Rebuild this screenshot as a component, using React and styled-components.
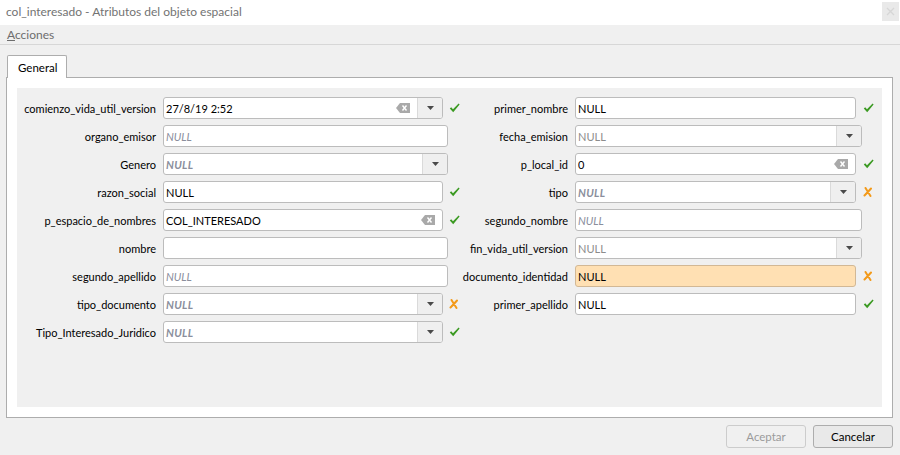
import styled, { createGlobalStyle } from "styled-components";

const GlobalStyle = createGlobalStyle`
  html, body {
    margin: 0;
    padding: 0;
    background: #f0f0f0;
  }
  body {
    font-family: Lato, "Liberation Sans", sans-serif;
    font-size: 11px;
    color: #000;
  }
`;

// form data: left and right columns of the attribute form
const leftFields = [
  { label: "comienzo_vida_util_version", kind: "datetime", value: "27/8/19 2:52", clear: true, status: "ok" },
  { label: "organo_emisor", kind: "text", placeholder: true },
  { label: "Genero", kind: "combo" },
  { label: "razon_social", kind: "text", value: "NULL", status: "ok" },
  { label: "p_espacio_de_nombres", kind: "text", value: "COL_INTERESADO", clear: true, status: "ok" },
  { label: "nombre", kind: "text", value: "" },
  { label: "segundo_apellido", kind: "text", placeholder: true },
  { label: "tipo_documento", kind: "combo", status: "bad" },
  { label: "Tipo_Interesado_Juridico", kind: "combo", status: "ok" },
];

const rightFields = [
  { label: "primer_nombre", kind: "text", value: "NULL", status: "ok" },
  { label: "fecha_emision", kind: "date" },
  { label: "p_local_id", kind: "text", value: "0", clear: true, status: "ok" },
  { label: "tipo", kind: "combo", status: "bad" },
  { label: "segundo_nombre", kind: "text", placeholder: true },
  { label: "fin_vida_util_version", kind: "date" },
  { label: "documento_identidad", kind: "text", value: "NULL", warn: true, status: "bad" },
  { label: "primer_apellido", kind: "text", value: "NULL", status: "ok" },
  null,
];

const ClearIcon = () => (
  <svg width="14" height="10" viewBox="0 0 14 10">
    <polygon points="0,5 4,0 14,0 14,10 4,10" fill="#a9a9a9" />
    <path d="M6.5 2.5 L10.5 7.5 M10.5 2.5 L6.5 7.5" stroke="#fff" strokeWidth="1.4" />
  </svg>
);

const ArrowIcon = () => (
  <svg width="7" height="4" viewBox="0 0 7 4">
    <polygon points="0,0 7,0 3.5,4" fill="#4a4a4a" />
  </svg>
);

// heavy check mark, thicker towards the right stroke
const CheckIcon = () => (
  <svg width="11" height="10" viewBox="0 0 11 10">
    <path d="M0.8 5.4 L2.2 4.2 L4 6.2 L9.6 0.6 L10.6 1.6 L4.2 9.2 Z" fill="#3b9a22" />
  </svg>
);

const CrossIcon = () => (
  <svg width="10" height="10" viewBox="0 0 10 10">
    <path d="M2.5 1 Q5 5 7.5 9 M8 1.5 Q5 5 1.5 8.5" fill="none" stroke="#f39a1a" strokeWidth="2" strokeLinecap="round" />
  </svg>
);

const FieldInput = ({ field }) => {
  const { kind, value, placeholder, clear, warn } = field;
  let text = null;
  if (kind === "combo") text = <ComboNull>NULL</ComboNull>;
  else if (kind === "date") text = <DateNull>NULL</DateNull>;
  else if (placeholder) text = <Placeholder>NULL</Placeholder>;
  else text = <Value>{value}</Value>;

  return (
    <Field $warn={warn}>
      {text}
      {clear && (
        <ClearSlot>
          <ClearIcon />
        </ClearSlot>
      )}
      {(kind === "combo" || kind === "date" || kind === "datetime") && (
        <DropButton>
          <ArrowIcon />
        </DropButton>
      )}
    </Field>
  );
};

const FormCell = ({ field, side }) => {
  if (!field) return <Cell />;
  return (
    <Cell>
      <Label $side={side}>{field.label}</Label>
      <FieldInput field={field} />
      <StatusSlot $side={side} $has={!!field.status}>
        {field.status === "ok" && <CheckIcon />}
        {field.status === "bad" && <CrossIcon />}
      </StatusSlot>
    </Cell>
  );
};

export default function App() {
  return (
    <Window>
      <GlobalStyle />
      <TitleBar>
        <Title>col_interesado - Atributos del objeto espacial</Title>
        <CloseButton>
          <svg width="9" height="9" viewBox="0 0 9 9">
            <path d="M1 1 L8 8 M8 1 L1 8" stroke="#d6d6d6" strokeWidth="1.3" />
          </svg>
        </CloseButton>
      </TitleBar>
      <MenuBar>
        <MenuItem>
          <u>A</u>cciones
        </MenuItem>
      </MenuBar>
      <Body>
        <TabBar>
          <Tab>General</Tab>
        </TabBar>
        <Pane>
          <FormArea>
            {leftFields.map((f, i) => [
              <FormCell key={`l${i}`} field={f} side="left" />,
              <FormCell key={`r${i}`} field={rightFields[i]} side="right" />,
            ])}
          </FormArea>
        </Pane>
        <Footer>
          <Button disabled>Aceptar</Button>
          <Button>Cancelar</Button>
        </Footer>
      </Body>
    </Window>
  );
}

const Window = styled.div`
  width: 900px;
  height: 455px;
  display: flex;
  flex-direction: column;
  background: #f0f0f0;
  overflow: hidden;
`;

const TitleBar = styled.div`
  height: 25px;
  background: #fff;
  display: flex;
  align-items: center;
  justify-content: space-between;
  padding: 0 1px 0 6px;
`;

const Title = styled.span`
  color: #737373;
  font-size: 12px;
  margin-top: -3px;
`;

const CloseButton = styled.div`
  width: 17px;
  height: 19px;
  margin-top: -3px;
  background: #e9e9e9;
  display: flex;
  align-items: center;
  justify-content: center;
`;

const MenuBar = styled.div`
  height: 19px;
  display: flex;
  align-items: center;
  padding-left: 7px;
  border-bottom: 1px solid #d7d7d7;
`;

const MenuItem = styled.span`
  color: #6d6d6d;
  font-size: 12px;
`;

const Body = styled.div`
  flex: 1;
  display: flex;
  flex-direction: column;
  padding: 10px 7px 0 6px;
`;

const TabBar = styled.div`
  display: flex;
  padding-left: 1px;
  position: relative;
  z-index: 1;
`;

const Tab = styled.div`
  width: 60px;
  height: 23px;
  box-sizing: border-box;
  background: #fff;
  border: 1px solid #adadad;
  border-bottom: none;
  border-radius: 2px 2px 0 0;
  padding-left: 10px;
  display: flex;
  align-items: center;
  font-size: 11.5px;
`;

const Pane = styled.div`
  margin-top: -1px;
  background: #fff;
  border: 1px solid #adadad;
  padding: 10px;
`;

const FormArea = styled.div`
  height: 319px;
  box-sizing: border-box;
  background: #f0f0f0;
  padding: 9px 0 0 9px;
  display: grid;
  grid-template-columns: 439px 417px;
  grid-auto-rows: 22px;
  row-gap: 6px;
  align-content: start;
`;

const Cell = styled.div`
  display: flex;
  align-items: center;
  height: 22px;
`;

const Label = styled.div`
  width: ${({ $side }) => ($side === "left" ? 130 : 103)}px;
  flex-shrink: 0;
  margin-right: 7px;
  display: flex;
  justify-content: flex-end;
  white-space: nowrap;
  font-size: 11px;
  color: #000;
`;

const Field = styled.div`
  flex: 1;
  height: 22px;
  box-sizing: border-box;
  display: flex;
  align-items: center;
  border: 1px solid ${({ $warn }) => ($warn ? "#d2b895" : "#bcbcbc")};
  border-radius: 3px;
  background: ${({ $warn }) => ($warn ? "#ffe0b3" : "#fff")};
  overflow: hidden;
`;

const Value = styled.span`
  flex: 1;
  padding-left: 2px;
  font-size: 11px;
  white-space: nowrap;
`;

const Placeholder = styled(Value)`
  font-style: italic;
  color: #8a8e9c;
`;

const ComboNull = styled(Value)`
  font-style: italic;
  font-weight: 700;
  color: #8a8e9c;
  letter-spacing: 0.3px;
`;

const DateNull = styled(Value)`
  color: #8c8c8c;
`;

const ClearSlot = styled.div`
  display: flex;
  align-items: center;
  padding: 0 7px 0 4px;
`;

const DropButton = styled.div`
  width: 24px;
  align-self: stretch;
  display: flex;
  align-items: center;
  justify-content: center;
  border-left: 1px solid #dadada;
  background: #efefef;
`;

const StatusSlot = styled.div`
  width: ${({ $side, $has }) =>
    $side === "left" ? ($has ? 22 : 17) : $has ? 26 : 20}px;
  flex-shrink: 0;
  box-sizing: border-box;
  padding-left: ${({ $side }) => ($side === "left" ? 6 : 7)}px;
  display: flex;
  align-items: center;
`;

const Footer = styled.div`
  display: flex;
  justify-content: flex-end;
  gap: 7px;
  margin-top: 7px;
`;

const Button = styled.button`
  width: 80px;
  height: 23px;
  box-sizing: border-box;
  font-family: Lato, "Liberation Sans", sans-serif;
  font-size: 11.5px;
  border-radius: 3px;
  border: 1px solid ${({ disabled }) => (disabled ? "#cccccc" : "#adadad")};
  background: ${({ disabled }) => (disabled ? "#f0f0f0" : "#e9e9e9")};
  color: ${({ disabled }) => (disabled ? "#9b9b9b" : "#000")};
  padding: 0;
`;
